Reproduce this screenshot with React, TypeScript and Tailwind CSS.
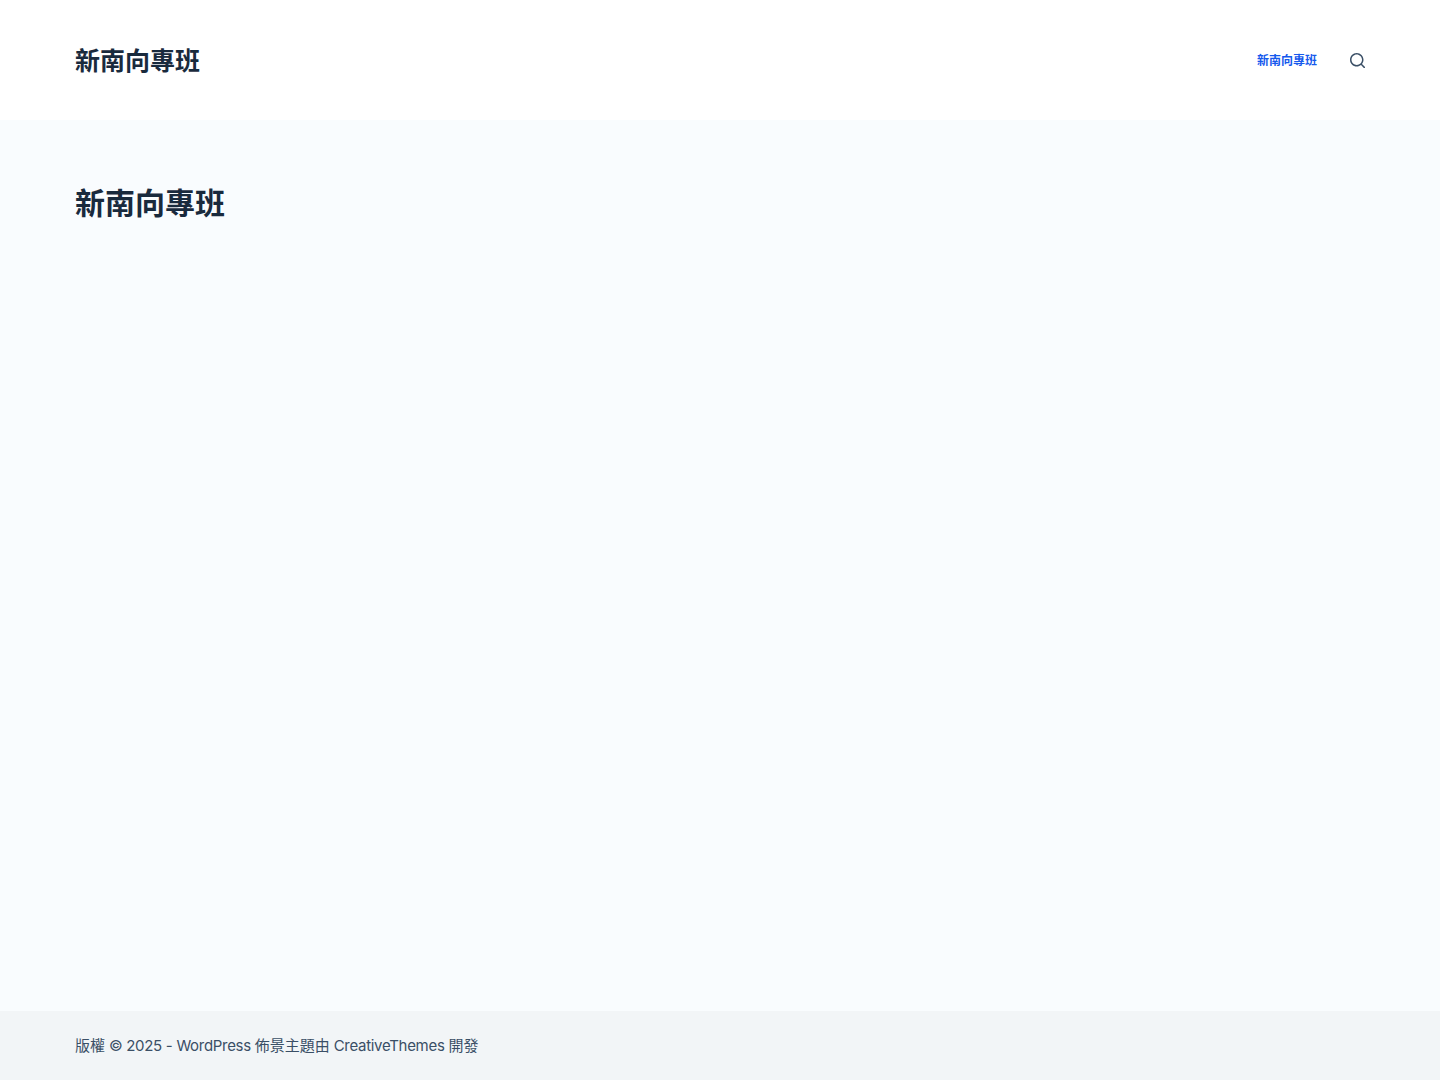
export default function App() {
  const latin = "tracking-[-0.3px]";
  return (
    <div className="min-h-[1080px] flex flex-col bg-[#f9fcfe] text-[#192a3d]" style={{ fontFamily: 'Inter, "Noto Sans CJK TC", sans-serif' }}>
      <header className="h-[120px] bg-white flex items-center justify-between px-[75px]">
        <div className="text-[25px] font-bold leading-none pt-[2px]">新南向專班</div>
        <nav className="flex items-center gap-[30px]">
          <a className="text-[12px] font-bold text-[#1559ed] pt-[1px] pr-[1px]">新南向專班</a>
          <svg width="15" height="15" viewBox="0 0 15 15" fill="currentColor" className="text-[#3a4f66] ml-[2px]">
            <path d="M14.8,13.7L12,11c0.9-1.2,1.5-2.6,1.5-4.2c0-3.7-3-6.8-6.8-6.8S0,3,0,6.8s3,6.8,6.8,6.8c1.6,0,3.1-0.6,4.2-1.5l2.8,2.8c0.1,0.1,0.3,0.2,0.5,0.2s0.4-0.1,0.5-0.2C15.1,14.5,15.1,14,14.8,13.7z M1.5,6.8c0-2.9,2.4-5.2,5.2-5.2S12,3.9,12,6.8S9.6,12,6.8,12S1.5,9.6,1.5,6.8z" />
          </svg>
        </nav>
      </header>
      <main className="flex-1 px-[75px] pt-[63px]">
        <h1 className="text-[30px] font-bold leading-[40px]">新南向專班</h1>
      </main>
      <footer className="h-[69px] bg-[#f2f5f7] flex items-center px-[75px] pt-[1px] text-[15px] text-[#3a4f66]">
        <p className="whitespace-pre">
          版權<span className={latin}> © 2025 - WordPress </span>佈景主題由<span className={latin}> CreativeThemes </span>開發
        </p>
      </footer>
    </div>
  );
}
